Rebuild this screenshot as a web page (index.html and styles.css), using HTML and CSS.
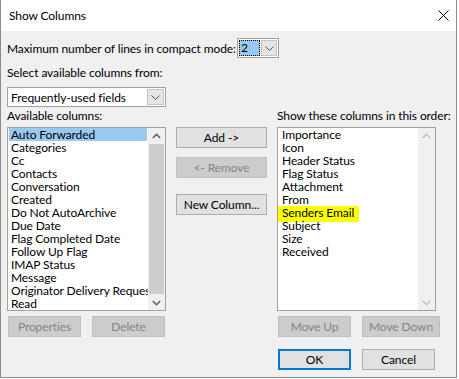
FILE: index.html
```html
<!DOCTYPE html>
<html lang="en">
<head>
    <meta charset="UTF-8">
    <title>Show Columns</title>
    <link rel="stylesheet" href="styles.css">
</head>
<body>
    <div class="dialog">
        <div class="titlebar">
            <span class="title">Show Columns</span>
            <svg class="close" width="11" height="11" viewBox="0 0 11 11">
                <path d="M0.5 0.5 L10.5 10.5 M10.5 0.5 L0.5 10.5" stroke="#000" stroke-width="1" fill="none"/>
            </svg>
        </div>

        <div class="content">
            <div class="lines-row">
                <label class="lines-label">Maximum number of lines in compact mode:</label>
                <div class="spin">
                    <span class="spin-value">2</span>
                    <span class="spin-btn">
                        <svg width="9" height="5" viewBox="0 0 9 5"><polyline points="0.5,0.5 4.5,4.5 8.5,0.5" stroke="#555" fill="none"/></svg>
                    </span>
                </div>
            </div>

            <div class="field-label">Select available columns from:</div>
            <div class="combo">
                <span class="combo-text">Frequently-used fields</span>
                <span class="combo-btn">
                    <svg width="9" height="5" viewBox="0 0 9 5"><polyline points="0.5,0.5 4.5,4.5 8.5,0.5" stroke="#555" fill="none"/></svg>
                </span>
            </div>

            <div class="columns">
                <div class="col">
                    <div class="col-label">Available columns:</div>
                    <div class="listbox">
                        <ul class="items items-left">
                            <li class="selected">Auto Forwarded</li>
                            <li>Categories</li>
                            <li>Cc</li>
                            <li>Contacts</li>
                            <li>Conversation</li>
                            <li>Created</li>
                            <li>Do Not AutoArchive</li>
                            <li>Due Date</li>
                            <li>Flag Completed Date</li>
                            <li>Follow Up Flag</li>
                            <li>IMAP Status</li>
                            <li>Message</li>
                            <li>Originator Delivery Requested</li>
                            <li>Read</li>
                        </ul>
                        <div class="scrollbar">
                            <div class="sb-arrow">
                                <svg width="9" height="6" viewBox="0 0 9 6"><polyline points="0.8,5 4.5,1.3 8.2,5" stroke="#606060" stroke-width="1.6" fill="none"/></svg>
                            </div>
                            <div class="sb-thumb"></div>
                            <div class="sb-arrow">
                                <svg width="9" height="6" viewBox="0 0 9 6"><polyline points="0.8,1 4.5,4.7 8.2,1" stroke="#606060" stroke-width="1.6" fill="none"/></svg>
                            </div>
                        </div>
                    </div>
                    <div class="btn-row">
                        <button class="btn" disabled>Properties</button>
                        <button class="btn" disabled>Delete</button>
                    </div>
                </div>

                <div class="middle">
                    <button class="btn btn-add">Add -&gt;</button>
                    <button class="btn btn-remove" disabled>&lt;- Remove</button>
                    <button class="btn btn-new">New Column...</button>
                </div>

                <div class="col">
                    <div class="col-label">Show these columns in this order:</div>
                    <div class="listbox">
                        <ul class="items items-right">
                            <li>Importance</li>
                            <li>Icon</li>
                            <li>Header Status</li>
                            <li>Flag Status</li>
                            <li>Attachment</li>
                            <li>From</li>
                            <li class="marked"><span>Senders Email</span></li>
                            <li>Subject</li>
                            <li>Size</li>
                            <li>Received</li>
                        </ul>
                        <div class="scrollbar disabled">
                            <div class="sb-arrow">
                                <svg width="9" height="6" viewBox="0 0 9 6"><polyline points="0.8,5 4.5,1.3 8.2,5" stroke="#c2c2c2" stroke-width="1.6" fill="none"/></svg>
                            </div>
                            <div class="sb-track"></div>
                            <div class="sb-arrow">
                                <svg width="9" height="6" viewBox="0 0 9 6"><polyline points="0.8,1 4.5,4.7 8.2,1" stroke="#c2c2c2" stroke-width="1.6" fill="none"/></svg>
                            </div>
                        </div>
                    </div>
                    <div class="btn-row">
                        <button class="btn" disabled>Move Up</button>
                        <button class="btn btn-wide" disabled>Move Down</button>
                    </div>
                </div>
            </div>

            <div class="footer">
                <div class="btn-row footer-buttons">
                    <button class="btn btn-default">OK</button>
                    <button class="btn">Cancel</button>
                </div>
            </div>
        </div>
    </div>
</body>
</html>
```

FILE: styles.css
```css
html, body {
    margin: 0;
    padding: 0;
    background: #fff;
}
body {
    font-family: Lato, 'Liberation Sans', sans-serif;
    font-size: 12px;
    letter-spacing: -0.1px;
    color: #000;
}
.dialog {
    width: 455px;
    height: 377px;
    border: 1px solid #8c8c8c;
    border-top: none;
    background: #f0f0f0;
}
.titlebar {
    height: 31px;
    background: #fff;
    display: flex;
    align-items: center;
    justify-content: space-between;
    padding: 0 7px 0 8px;
}
.close {
    display: block;
}
.content {
    padding: 7px 6px 0;
}
.lines-row {
    display: flex;
    align-items: center;
    height: 20px;
}
.lines-label {
    width: 230px;
    flex: none;
    white-space: nowrap;
}
.spin {
    width: 42px;
    height: 20px;
    box-sizing: border-box;
    border: 1px solid #a0a0a0;
    background: #fff;
    display: flex;
    gap: 1px;
    padding: 1px;
}
.spin-value {
    width: 21px;
    background: #99c9ef;
    outline: 1px dotted #000;
    outline-offset: -1px;
    line-height: 16px;
    padding-left: 2px;
    box-sizing: border-box;
}
.spin-btn, .combo-btn {
    flex: none;
    box-sizing: border-box;
    background: #e5e5e5;
    border: 1px solid #c4c4c4;
    display: flex;
    align-items: center;
    justify-content: center;
}
.spin-btn {
    flex: 1;
}
.field-label {
    margin-top: 7px;
    line-height: 16px;
}
.combo {
    margin-top: 6px;
    width: 159px;
    height: 20px;
    box-sizing: border-box;
    border: 1px solid #a0a0a0;
    background: #fff;
    display: flex;
    align-items: center;
    padding: 1px 1px 1px 3px;
}
.combo-text {
    flex: 1;
    white-space: nowrap;
}
.combo-btn {
    width: 17px;
    height: 16px;
}
.columns {
    margin-top: 1px;
    display: grid;
    grid-template-columns: 159px 91px 159px;
    column-gap: 10px;
}
.col-label {
    line-height: 16px;
    margin-bottom: 3px;
    white-space: nowrap;
}
.listbox {
    height: 184px;
    box-sizing: border-box;
    border: 1px solid #a0a0a0;
    background: #fff;
    display: flex;
}
.items {
    flex: 1;
    min-width: 0;
    list-style: none;
    margin: 0;
    padding: 0;
    overflow: hidden;
}
.items li {
    height: 13px;
    line-height: 13px;
    white-space: nowrap;
}
.items-left li {
    margin: 0 1px;
    padding-left: 2px;
}
.items-right li {
    padding-left: 4px;
}
.items li.selected {
    background: #99c9ef;
}
.marked span {
    display: block;
    width: 81px;
    height: 16px;
    margin-left: -4px;
    padding-left: 4px;
    box-sizing: border-box;
    background: #ffff00;
}
.scrollbar {
    width: 17px;
    flex: none;
    background: #f0f0f0;
    display: flex;
    flex-direction: column;
}
.sb-arrow {
    height: 15px;
    display: flex;
    align-items: center;
    justify-content: center;
}
.sb-thumb {
    flex: 1;
    margin: 1px 1px;
    background: #cdcdcd;
}
.sb-track {
    flex: 1;
}
.middle {
    padding-top: 19px;
    display: flex;
    flex-direction: column;
}
.btn {
    height: 21px;
    box-sizing: border-box;
    border: 1px solid #adadad;
    background: #e1e1e1;
    font-family: inherit;
    font-size: 12px;
    letter-spacing: inherit;
    color: #000;
    padding: 0;
    margin: 0;
}
.btn:disabled {
    background: #cccccc;
    border-color: #bfbfbf;
    color: #838383;
}
.btn-remove {
    margin-top: 9px;
}
.btn-new {
    margin-top: 16px;
}
.btn-row {
    display: flex;
    gap: 11px;
    margin-top: 5px;
    padding-left: 1px;
}
.btn-row .btn {
    width: 73px;
    flex: none;
}
.btn-row .btn-wide {
    width: 78px;
}
.footer {
    margin-top: 12px;
    display: flex;
    justify-content: flex-end;
    padding-right: 15px;
}
.footer-buttons {
    margin-top: 0;
}
.btn-default {
    border: 2px solid #0078d7;
}
```
